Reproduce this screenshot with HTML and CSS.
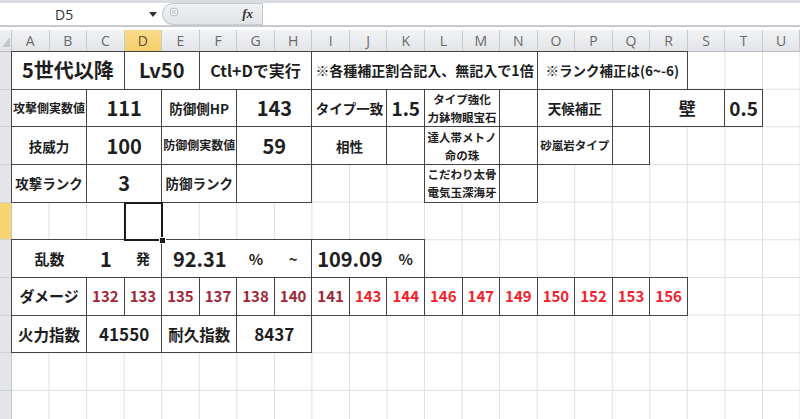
FILE: index.html
```html
<!DOCTYPE html>
<html lang="ja">
<head>
<meta charset="utf-8">
<title>Sheet</title>
<link rel="stylesheet" href="styles.css">
</head>
<body>
<div class="fbar">
  <div class="namebox">
    <span class="nb-text">D5</span>
    <svg class="nb-arrow" width="8" height="5" viewBox="0 0 8 5"><polygon points="0,0 8,0 4,5" fill="#333"/></svg>
  </div>
  <div class="fx-wrap">
    <svg class="grip" width="10" height="10" viewBox="0 0 10 10"><circle cx="5" cy="5" r="4" fill="#eef0f2" stroke="#b9bdc3" stroke-width="1"/><line x1="3" y1="4" x2="7" y2="4" stroke="#b9bdc3" stroke-width="0.8"/><line x1="3" y1="6" x2="7" y2="6" stroke="#b9bdc3" stroke-width="0.8"/></svg>
    <span class="fx">fx</span>
  </div>
  <div class="finput"></div>
</div>

<div class="sheet">
  <div class="corner"><svg width="12" height="22" viewBox="0 0 12 22"><polygon points="2,17 10,17 10,7" fill="#c3c7cc"/></svg></div>
  <div class="ch">A</div><div class="ch">B</div><div class="ch">C</div><div class="ch act">D</div><div class="ch">E</div><div class="ch">F</div><div class="ch">G</div><div class="ch">H</div><div class="ch">I</div><div class="ch">J</div><div class="ch">K</div><div class="ch">L</div><div class="ch">M</div><div class="ch">N</div><div class="ch">O</div><div class="ch">P</div><div class="ch">Q</div><div class="ch">R</div><div class="ch">S</div><div class="ch">T</div><div class="ch">U</div>

  <!-- row 1 -->
  <div class="rh"></div>
  <div class="c b s3 f20">5世代以降</div>
  <div class="c b s2 f20">Lv50</div>
  <div class="c b s3 f16">Ctl+Dで実行</div>
  <div class="c b s6 f14">※各種補正割合記入、無記入で1倍</div>
  <div class="c b s4 f135">※ランク補正は(6~-6)</div>

  <!-- row 2 -->
  <div class="rh"></div>
  <div class="c b s2 f12">攻撃側実数値</div>
  <div class="c b s2 f20">111</div>
  <div class="c b s2 f135">防御側HP</div>
  <div class="c b s2 f20">143</div>
  <div class="c b s2 f135">タイプ一致</div>
  <div class="c b f19">1.5</div>
  <div class="c b s2 two"><span>タイプ強化</span><span>力鉢物眼宝石</span></div>
  <div class="c b"></div>
  <div class="c b s2 f135">天候補正</div>
  <div class="c b"></div>
  <div class="c b s2 f17">壁</div>
  <div class="c b f19">0.5</div>

  <!-- row 3 -->
  <div class="rh"></div>
  <div class="c b s2 f135">技威力</div>
  <div class="c b s2 f20">100</div>
  <div class="c b s2 f12">防御側実数値</div>
  <div class="c b s2 f20">59</div>
  <div class="c b s2 f135">相性</div>
  <div class="c b"></div>
  <div class="c b s2 two"><span>達人帯メトノ</span><span>命の珠</span></div>
  <div class="c b"></div>
  <div class="c b s2 f115">砂嵐岩タイプ</div>
  <div class="c b"></div>

  <!-- row 4 -->
  <div class="rh"></div>
  <div class="c b s2 f135">攻撃ランク</div>
  <div class="c b s2 f20">3</div>
  <div class="c b s2 f135">防御ランク</div>
  <div class="c b s2"></div>
  <div class="e"></div><div class="e"></div><div class="e"></div>
  <div class="c b s2 two"><span>こだわり太骨</span><span>電気玉深海牙</span></div>
  <div class="c b"></div>

  <!-- row 5 -->
  <div class="rh sel"></div>
  <div class="e"></div><div class="e"></div><div class="e"></div>
  <div class="selcell"><i class="handle"></i></div>

  <!-- row 6 -->
  <div class="rh"></div>
  <div class="c g6 l s2 f15">乱数</div>
  <div class="c g6 f20">1</div>
  <div class="c g6 r f14">発</div>
  <div class="c g6 l s2 f20">92.31</div>
  <div class="c g6 f15">%</div>
  <div class="c g6 r f15">~</div>
  <div class="c g6 l s2 f20">109.09</div>
  <div class="c g6 r f15">%</div>

  <!-- row 7 -->
  <div class="rh"></div>
  <div class="c b s2 f15">ダメージ</div>
  <div class="c b f15 dr">132</div>
  <div class="c b f15 dr">133</div>
  <div class="c b f15 dr">135</div>
  <div class="c b f15 dr">137</div>
  <div class="c b f15 dr">138</div>
  <div class="c b f15 dr">140</div>
  <div class="c b f15 dr">141</div>
  <div class="c b f15 br">143</div>
  <div class="c b f15 br">144</div>
  <div class="c b f15 br">146</div>
  <div class="c b f15 br">147</div>
  <div class="c b f15 br">149</div>
  <div class="c b f15 br">150</div>
  <div class="c b f15 br">152</div>
  <div class="c b f15 br">153</div>
  <div class="c b f15 br">156</div>

  <!-- row 8 -->
  <div class="rh"></div>
  <div class="c b s2 f155">火力指数</div>
  <div class="c b s2 f17">41550</div>
  <div class="c b s2 f155">耐久指数</div>
  <div class="c b s2 f17">8437</div>

  <div class="rh"></div>
  <div class="rh"></div>
</div>
</body>
</html>
```

FILE: styles.css
```css
html, body {
  margin: 0;
  padding: 0;
}
body {
  width: 800px;
  height: 419px;
  overflow: hidden;
  background: #fff;
  font-family: "Noto Sans CJK JP", "Noto Sans", sans-serif;
  color: #1e1e1e;
}

/* formula bar */
.fbar {
  display: flex;
  height: 27px;
  box-sizing: border-box;
  border-top: 3px solid #d9dce0;
  border-bottom: 2px solid #c6cace;
  background: #fff;
}
.namebox {
  width: 162px;
  display: flex;
  align-items: center;
  box-sizing: border-box;
  padding-left: 55px;
  padding-right: 4px;
}
.nb-text {
  font-family: "Open Sans", "Liberation Sans", sans-serif;
  font-size: 14px;
  color: #333;
  flex: 1;
}
.nb-arrow {
  display: block;
  margin-right: 1px;
}
.fx-wrap {
  width: 100px;
  display: flex;
  align-items: center;
  justify-content: space-between;
  box-sizing: border-box;
  padding: 0 9px 0 6px;
  background: linear-gradient(#f0f1f3, #e1e4e7);
  border: 1px solid #c7cbd0;
  border-right: none;
  border-radius: 11px 0 0 11px;
}
.grip {
  display: block;
  margin-top: -5px;
}
.fx {
  font-family: "Liberation Serif", serif;
  font-style: italic;
  font-weight: bold;
  font-size: 13px;
  color: #333;
}
.finput {
  flex: 1;
  border-left: 1px solid #c7cbd0;
  background: #fff;
}

/* sheet */
.sheet {
  margin-top: 3px;
  display: grid;
  grid-template-columns: 12px repeat(21, 37.55px);
  grid-template-rows: 22px repeat(10, 37.67px);
  background-color: #fff;
  background-image:
    linear-gradient(to right, transparent calc(100% - 1px), #dedfe1 calc(100% - 1px)),
    linear-gradient(to bottom, transparent calc(100% - 1px), #dedfe1 calc(100% - 1px));
  background-size: 37.55px 37.67px;
  background-position: 12px 22px;
}

.corner {
  background: linear-gradient(#eef0f2, #e2e4e7);
  border-right: 1px solid #c3c7cc;
  border-bottom: 1px solid #b8bcc1;
  box-sizing: border-box;
}
.corner svg { display: block; }

.ch {
  display: flex;
  align-items: center;
  justify-content: center;
  background: linear-gradient(#f2f3f5, #e2e4e7);
  border-right: 1px solid #c8cbd0;
  border-bottom: 1px solid #b8bcc1;
  font-family: "Open Sans", "Liberation Sans", sans-serif;
  font-size: 14px;
  color: #6a6a6a;
}
.ch.act {
  background: linear-gradient(#fadb8a, #f5cf6c);
  border-bottom: 1px solid #e2a93a;
  color: #5d5236;
}

.rh {
  grid-column: 1;
  background: #e3e5e9;
  border-right: 1px solid #c3c7cc;
  border-bottom: 1px solid #cdd0d4;
}
.rh.sel {
  background: #f7d372;
}

/* cells */
.c {
  display: flex;
  align-items: center;
  justify-content: center;
  background: #fff;
  font-weight: bold;
  white-space: nowrap;
  line-height: 1.2;
  min-width: 0;
  overflow: hidden;
}
.b {
  border: 1px solid #444;
  margin: -1px 0 0 -1px;
}
.g6 {
  border-top: 1px solid #444;
  border-bottom: 1px solid #444;
  margin-top: -1px;
}
.g6.l {
  border-left: 1px solid #444;
  margin-left: -1px;
}
.g6.r {
  border-right: 1px solid #444;
}

.s2 { grid-column: span 2; }
.s3 { grid-column: span 3; }
.s4 { grid-column: span 4; }
.s6 { grid-column: span 6; }

.f12 { font-size: 12px; }
.f115 { font-size: 11.5px; }
.f135 { font-size: 13.5px; }
.f14 { font-size: 14px; }
.f15 { font-size: 15px; }
.f155 { font-size: 15.5px; }
.f16 { font-size: 16px; }
.f17 { font-size: 17px; }
.f19 { font-size: 19px; }
.f20 { font-size: 20px; }

.two {
  flex-direction: column;
  font-size: 11.5px;
  line-height: 18px;
}

.dr { color: #a1283a; }
.br { color: #f2222d; }

.selcell {
  position: relative;
  border: 2px solid #1b1b1b;
  margin: -1px;
}
.handle {
  position: absolute;
  right: -5px;
  bottom: -5px;
  width: 5px;
  height: 5px;
  background: #1b1b1b;
  border: 1px solid #fff;
}
```
